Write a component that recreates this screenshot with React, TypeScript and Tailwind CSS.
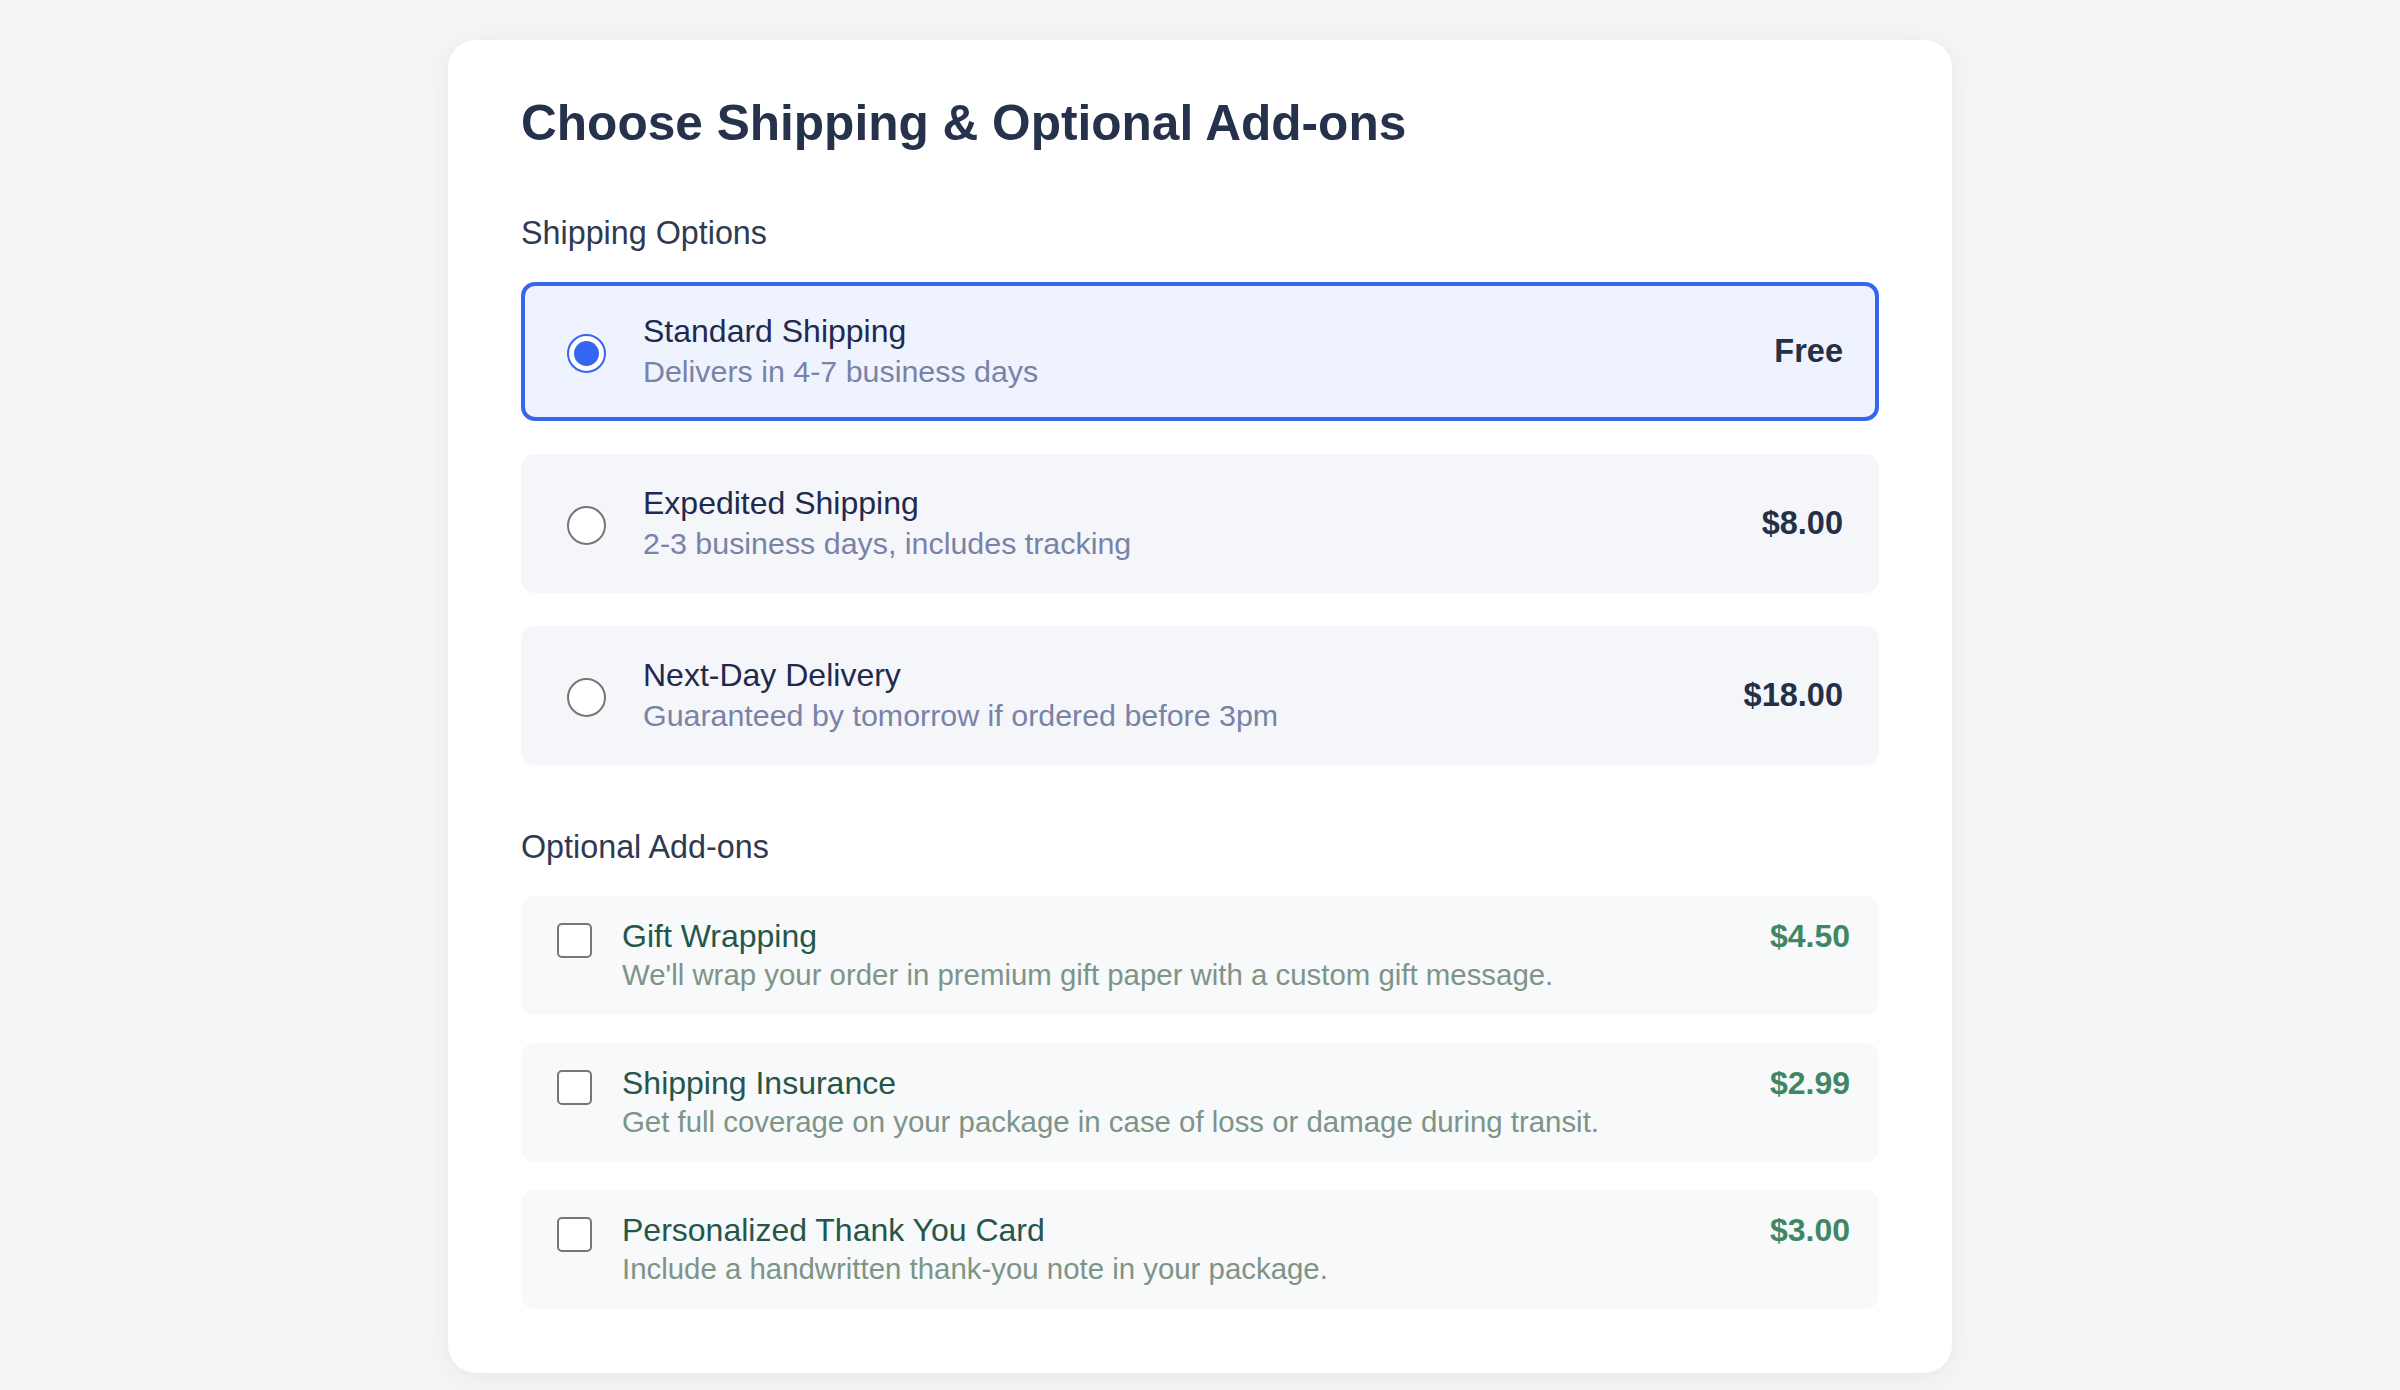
import { useState } from "react";

type ShippingOption = {
  id: string;
  title: string;
  subtitle: string;
  price: string;
};

type AddOn = {
  id: string;
  title: string;
  description: string;
  price: string;
};

const shippingOptions: ShippingOption[] = [
  {
    id: "standard",
    title: "Standard Shipping",
    subtitle: "Delivers in 4-7 business days",
    price: "Free",
  },
  {
    id: "expedited",
    title: "Expedited Shipping",
    subtitle: "2-3 business days, includes tracking",
    price: "$8.00",
  },
  {
    id: "nextday",
    title: "Next-Day Delivery",
    subtitle: "Guaranteed by tomorrow if ordered before 3pm",
    price: "$18.00",
  },
];

const addOns: AddOn[] = [
  {
    id: "gift",
    title: "Gift Wrapping",
    description: "We'll wrap your order in premium gift paper with a custom gift message.",
    price: "$4.50",
  },
  {
    id: "insurance",
    title: "Shipping Insurance",
    description: "Get full coverage on your package in case of loss or damage during transit.",
    price: "$2.99",
  },
  {
    id: "card",
    title: "Personalized Thank You Card",
    description: "Include a handwritten thank-you note in your package.",
    price: "$3.00",
  },
];

function Radio({ checked }: { checked: boolean }) {
  if (checked) {
    return (
      <span className="mt-[4px] flex h-[39px] w-[39px] shrink-0 items-center justify-center rounded-full border-[2.5px] border-[#3566f2] bg-white">
        <span className="h-[25px] w-[25px] rounded-full bg-[#3566f2]" />
      </span>
    );
  }
  return (
    <span className="mt-[4px] h-[39px] w-[39px] shrink-0 rounded-full border-[2.5px] border-[#767676] bg-white" />
  );
}

export default function App() {
  const [selected, setSelected] = useState("standard");
  const [extras, setExtras] = useState<string[]>([]);

  const toggleExtra = (id: string) => {
    setExtras((prev) =>
      prev.includes(id) ? prev.filter((x) => x !== id) : [...prev, id]
    );
  };

  return (
    <div className="min-h-screen bg-[#f5f5f5] pt-[40px] pb-[40px] font-['Liberation_Sans',Arial,sans-serif]">
      <div className="mx-auto w-[1504px] rounded-[28px] bg-white px-[73px] pt-[54px] pb-[64px] shadow-[0_4px_28px_rgba(0,0,0,0.06)]">
        <h1 className="text-[49.6px] font-bold leading-[58px] text-[#26314c]">
          Choose Shipping &amp; Optional Add-ons
        </h1>

        {/* Shipping */}
        <h2 className="mt-[61px] text-[32.3px] leading-[40px] text-[#2f3a52]">
          Shipping Options
        </h2>
        <div className="mt-[29px] flex flex-col gap-[33px]">
          {shippingOptions.map((opt) => {
            const isSel = selected === opt.id;
            return (
              <div
                key={opt.id}
                onClick={() => setSelected(opt.id)}
                className={
                  isSel
                    ? "flex cursor-pointer items-center rounded-[14px] border-4 border-[#3566f2] bg-[#eef3fe] pt-[25px] pb-[26px] pl-[42px] pr-[32px]"
                    : "flex cursor-pointer items-center rounded-[14px] border-4 border-transparent bg-[#f4f6fa] pt-[25px] pb-[26px] pl-[42px] pr-[32px]"
                }
              >
                <Radio checked={isSel} />
                <div className="ml-[37px] flex-1">
                  <div className="text-[32px] leading-[40px] text-[#1f2a4e]">
                    {opt.title}
                  </div>
                  <div className="text-[30.4px] leading-[40px] text-[#7982a7]">
                    {opt.subtitle}
                  </div>
                </div>
                <div className="text-[32.5px] font-bold leading-[40px] text-[#253047]">
                  {opt.price}
                </div>
              </div>
            );
          })}
        </div>

        {/* Add-ons */}
        <h2 className="mt-[62px] text-[32.3px] leading-[40px] text-[#2f3a52]">
          Optional Add-ons
        </h2>
        <div className="mt-[29px] flex flex-col gap-[28px]">
          {addOns.map((a) => {
            const on = extras.includes(a.id);
            return (
              <div
                key={a.id}
                onClick={() => toggleExtra(a.id)}
                className="flex cursor-pointer items-start rounded-[14px] bg-[#f7f9fb] pt-[20px] pb-[21px] pl-[36px] pr-[29px]"
              >
                <span
                  className={
                    on
                      ? "mt-[7px] h-[35px] w-[35px] shrink-0 rounded-[5px] border-2 border-[#3d8663] bg-[#3d8663]"
                      : "mt-[7px] h-[35px] w-[35px] shrink-0 rounded-[5px] border-2 border-[#767676] bg-white"
                  }
                />
                <div className="ml-[30px] flex-1">
                  <div className="text-[32px] leading-[40px] text-[#25564a]">
                    {a.title}
                  </div>
                  <div className="text-[29.4px] leading-[38px] text-[#7e9487]">
                    {a.description}
                  </div>
                </div>
                <div className="text-[32px] font-bold leading-[40px] text-[#3f8764]">
                  {a.price}
                </div>
              </div>
            );
          })}
        </div>
      </div>
    </div>
  );
}
